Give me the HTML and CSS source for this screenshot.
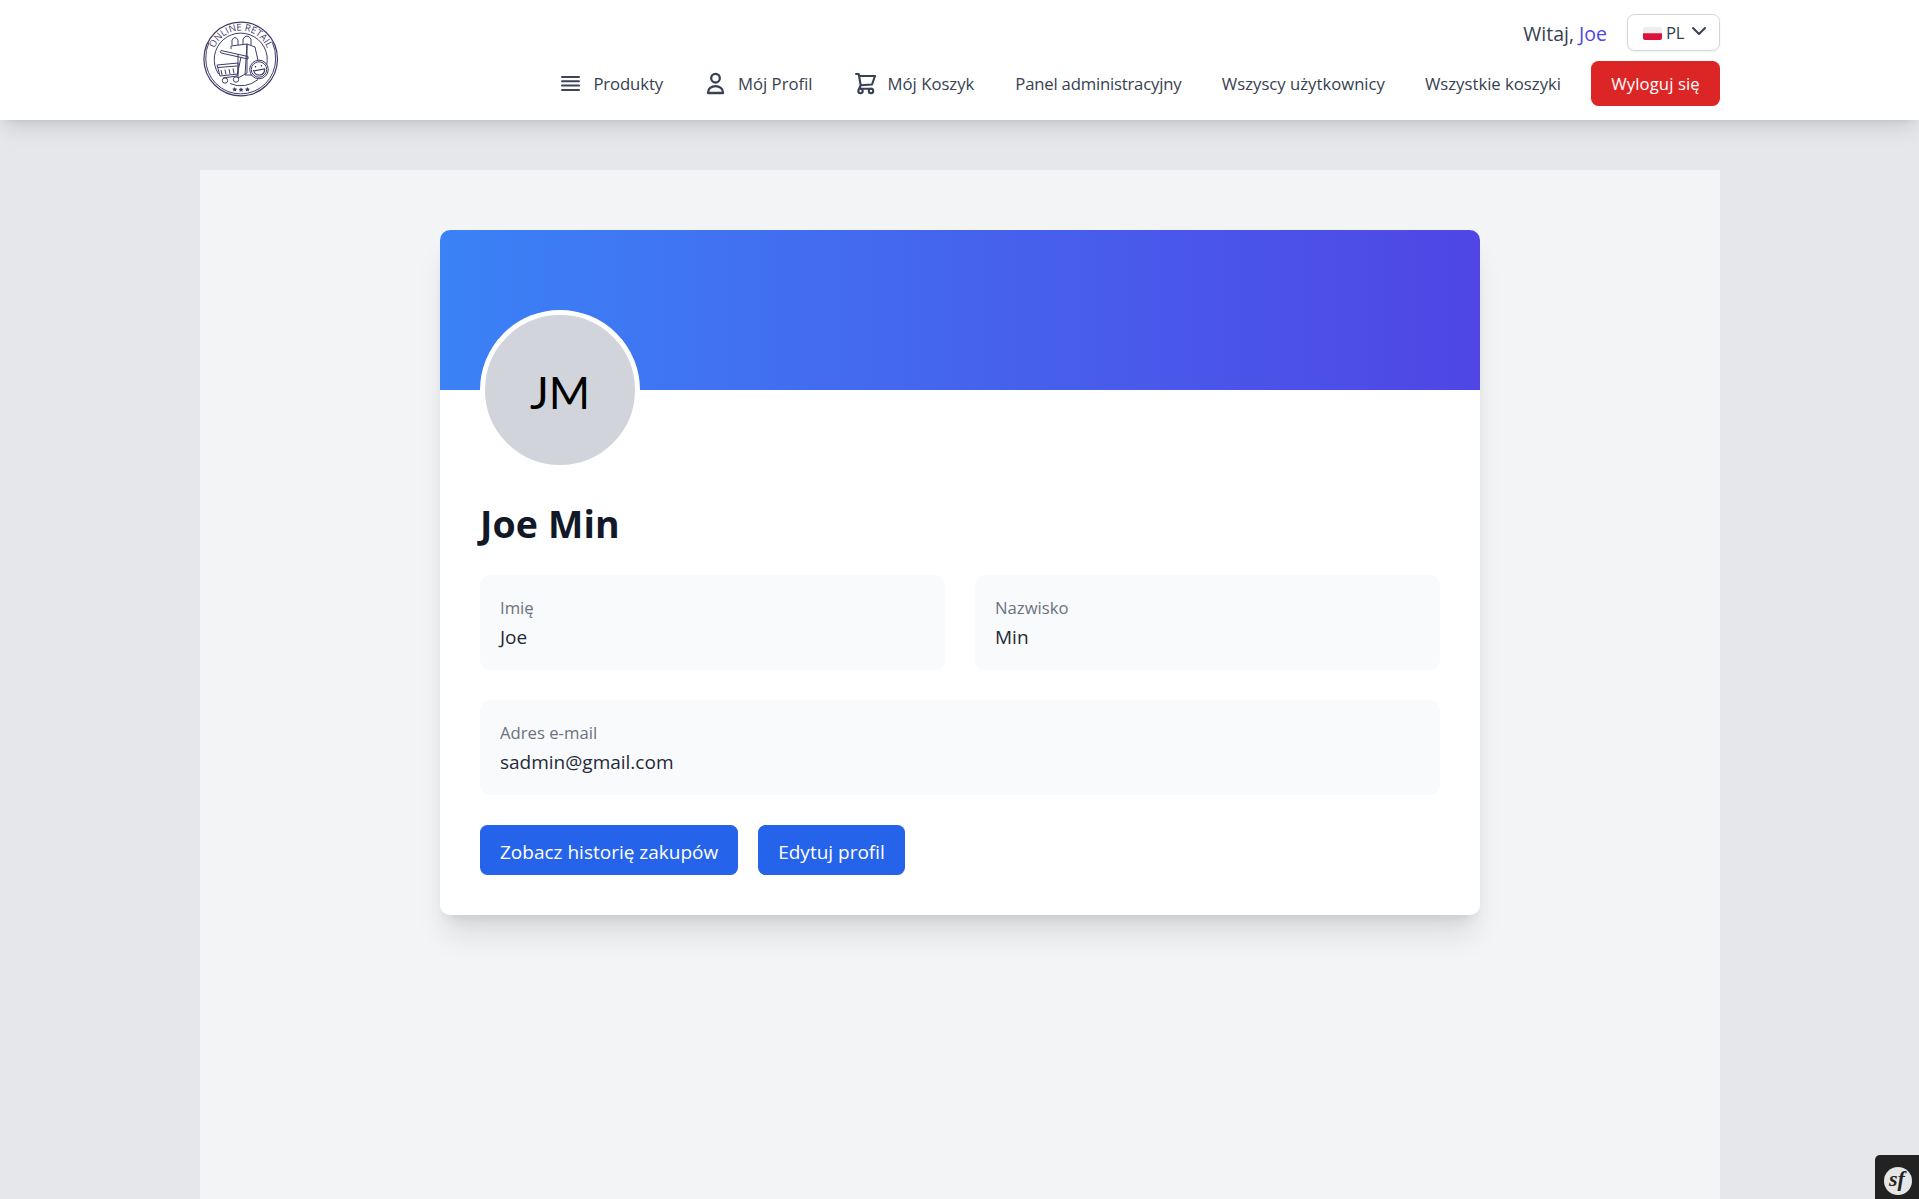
FILE: index.html
```html
<!DOCTYPE html>
<html lang="pl">
<head>
<meta charset="utf-8">
<title>Mój Profil</title>
<link rel="stylesheet" href="styles.css">
</head>
<body>
<header class="header">
  <div class="header-inner">
    <a class="logo">
      <svg width="80" height="80" viewBox="0 0 80 80" fill="none" stroke="#3f3d68" stroke-width="1">
        <defs><path id="arc" d="M12.300 45A28.200 28.200 0 1 1 67.300 45"/></defs>
        <circle cx="39.7" cy="39" r="36.8" stroke-width="1.2"/>
        <path d="M8 22.5A35 35 0 0 0 4.8 39a34.9 34.9 0 0 0 69.8 0 35 35 0 0 0-3.2-16.500"/>
        <path d="M17.500 54A26.500 26.500 0 1 1 62 54M29 63.500a26.500 26.500 0 0 0 28-4"/>
        <text class="logo-text"><textPath href="#arc" startOffset="50%">ONLINE RETAIL</textPath></text>
        <path d="M30 29V26l16-2v29l-9 5V34M46 24l8 3 4 18M46 24l-2 31h8M31 25v-5q3-5 6 0v5M42 24v-5q4-6 8 0v6"/>
        <path d="M20 30.500l27 6v2.500l-27-6q-1.500-1.200 0-2.500zM40 37l-4 19-14 2M16 45l21-2v11l-18 2zM17 47.500l19-1.500M20 50l1 5M24 49.500l1 5M28 49l1 5M32 48.500l1 5"/>
        <circle cx="24" cy="60.500" r="2.700"/><circle cx="35" cy="59.500" r="2.700"/>
        <circle cx="58" cy="49.500" r="9.300" fill="#fff"/><circle cx="58" cy="49.500" r="7.700"/>
        <path d="M52.500 50q1 5.500 6.500 5 5-1 4.500-6l-11 2M54.500 46v1.500M60.500 45v1.500" stroke-width="1.200"/>
        <g fill="#3f3d68" stroke="none"><path id="star" d="M33.700 67l.8 1.500 1.700.2-1.200 1.200.3 1.700-1.600-.8-1.500.8.3-1.700-1.300-1.200 1.700-.2z"/><use href="#star" x="6.300" y=".3"/><use href="#star" x="12.700"/></g>
      </svg>
    </a>
    <div class="header-right">
      <div class="greeting-row">
        <span class="greeting">Witaj, <a class="username">Joe</a></span>
        <button class="lang">
          <svg class="flag" width="19" height="13" viewBox="0 0 19 13"><rect width="19" height="13" rx="2" fill="#eee"/><path d="M0 6.300h19V11a2 2 0 0 1-2 2H2a2 2 0 0 1-2-2z" fill="#dc143c"/></svg>
          <span class="lang-code">PL</span>
          <svg class="chevron" width="16" height="10" viewBox="0 0 16 10" fill="none" stroke="#374151" stroke-width="2" stroke-linecap="round" stroke-linejoin="round"><path d="M2 2l6 6 6-6"/></svg>
        </button>
      </div>
      <nav class="nav">
        <a class="nav-link"><svg class="nav-icon" viewBox="0 0 25 25" stroke="#3b465a" stroke-width="2" stroke-linecap="round"><path d="M4 5.900h17M4 10.200h17M4 14.600h17M4 19h17"/></svg>Produkty</a>
        <a class="nav-link"><svg class="nav-icon" viewBox="0 0 25 25" fill="none" stroke="#374151" stroke-width="2.300" stroke-linejoin="round"><circle cx="12.500" cy="7.200" r="4.300"/><path d="M5 22v-.6a7.500 6.300 0 0 1 15 0v.6z"/></svg>Mój Profil</a>
        <a class="nav-link"><svg class="nav-icon" viewBox="0 0 25 25" fill="none" stroke="#374151" stroke-width="2.100" stroke-linecap="round" stroke-linejoin="round"><path d="M3 3h2.700l2 11.200-1.600 3.500h12.800M6.200 5H22l-3 8.500-11.300.7"/><circle cx="7.500" cy="20" r="2.200"/><circle cx="18" cy="20" r="2.200"/></svg>Mój Koszyk</a>
        <a class="nav-link nav-link-tight">Panel administracyjny</a>
        <a class="nav-link">Wszyscy użytkownicy</a>
        <a class="nav-link">Wszystkie koszyki</a>
        <a class="logout">Wyloguj się</a>
      </nav>
    </div>
  </div>
</header>
<main class="main">
  <section class="card">
    <div class="cover"></div>
    <div class="card-body">
      <div class="avatar"><span>JM</span></div>
      <h1 class="name">Joe Min</h1>
      <div class="fields">
        <div class="field"><div class="label">Imię</div><div class="value">Joe</div></div>
        <div class="field"><div class="label">Nazwisko</div><div class="value">Min</div></div>
        <div class="field field-wide"><div class="label">Adres e-mail</div><div class="value">sadmin@gmail.com</div></div>
      </div>
      <div class="actions">
        <a class="button">Zobacz historię zakupów</a>
        <a class="button">Edytuj profil</a>
      </div>
    </div>
  </section>
</main>
<div class="toolbar">
  <svg width="28" height="28" viewBox="0 0 28 28"><circle cx="14" cy="14" r="14" fill="#e6e6e6"/><text class="sf" x="13" y="19">sf</text></svg>
</div>
</body>
</html>
```
FILE: styles.css
```css
* { box-sizing: border-box; }
body {
  margin: 0;
  height: 1199px;
  overflow: hidden;
  display: flex;
  flex-direction: column;
  background: #e5e7eb;
  color: #1f2937;
  font-family: "Open Sans", "Noto Sans", sans-serif;
  font-size: 19px;
  line-height: 30px;
}
.header {
  flex: none;
  height: 120px;
  background: #fff;
  box-shadow: 0 12.5px 18.75px -3.75px rgba(0,0,0,.1), 0 5px 7.5px -5px rgba(0,0,0,.1);
}
.header-inner {
  width: 1520px;
  height: 120px;
  margin: 0 auto 0 200px;
  display: flex;
  justify-content: space-between;
}
.logo { padding: 20px 0 0 .5px; height: 100px; }
.logo svg { display: block; }
.logo-text {
  font: 9.5px "Open Sans", sans-serif;
  fill: #3f3d68;
  stroke: none;
  text-anchor: middle;
}
.header-right {
  display: flex;
  flex-direction: column;
  align-items: flex-end;
  gap: 10px;
  padding-top: 14px;
  color: #374151;
}
.greeting-row { display: flex; align-items: center; gap: 20px; height: 37px; }
.greeting { font-size: 19.5px; padding-top: 2px; }
.username { color: #4f46e5; }
.lang {
  display: flex;
  align-items: center;
  width: 93px;
  height: 37px;
  padding: 0 12px 0 15px;
  border: 1px solid #d1d5db;
  border-radius: 7.5px;
  background: #fff;
  color: #374151;
  font: 16.700px/25px "Open Sans", sans-serif;
  box-shadow: 0 1px 2.500px rgba(0,0,0,.05);
}
.flag { margin-top: 2px; }
.lang-code { margin-left: 4px; letter-spacing: -.3px; }
.chevron { margin: 0 0 4px auto; }
.nav {
  display: flex;
  align-items: center;
  height: 45px;
  gap: 40px;
  font-size: 16.700px;
  line-height: 25px;
  white-space: nowrap;
}
.nav-link { display: flex; align-items: center; gap: 10px; }
.nav-link:first-child { letter-spacing: -.1px; }
.nav-link:nth-child(3) { padding-right: 1px; }
.nav-link-tight { letter-spacing: -.2px; padding-right: .5px; }
.nav-icon { width: 25px; height: 25px; }
.logout {
  width: 129px;
  margin-left: -10px;
  padding: 10px 0;
  border-radius: 7.5px;
  background: #dc2626;
  color: #fff;
  text-align: center;
  letter-spacing: .1px;
}
.main {
  flex: 1;
  width: 1520px;
  margin: 50px 0 0 200px;
  padding: 60px 240px 0;
  background: #f3f4f6;
}
.card {
  width: 1040px;
  height: 685px;
  border-radius: 10px;
  background: #fff;
  overflow: hidden;
  box-shadow: 0 25px 31.25px -6.25px rgba(0,0,0,.1), 0 10px 12.5px -7.5px rgba(0,0,0,.1);
}
.cover { height: 160px; background: linear-gradient(to right, #3b82f6, #4f46e5); }
.card-body { padding: 0 40px 40px; }
.avatar {
  position: relative;
  width: 160px;
  height: 160px;
  margin-top: -80px;
  border: 5px solid #fff;
  border-radius: 50%;
  background: #d1d5db;
  color: #000;
  display: flex;
  align-items: center;
  justify-content: center;
  font-family: Lato, "Open Sans", sans-serif;
  font-size: 44.5px;
  line-height: 50px;
}
.avatar span { padding-top: 4px; }
.name {
  margin: 30px 0 0;
  height: 45px;
  color: #111827;
  font-size: 37.5px;
  line-height: 48px;
  letter-spacing: .1px;
  font-weight: 700;
}
.fields {
  display: grid;
  grid-template-columns: 1fr 1fr;
  gap: 30px;
  margin-top: 30px;
}
.field { height: 95px; padding: 20px; border-radius: 10px; background: #f9fafb; }
.field-wide { grid-column: span 2; }
.label { font-size: 16.700px; line-height: 25px; color: #6b7280; }
.value { line-height: 30px; padding-top: 2px; }
.actions { display: flex; gap: 20px; margin-top: 30px; }
.button {
  height: 50px;
  padding: 12px 20px 8px;
  border-radius: 7.5px;
  background: #2563eb;
  color: #fff;
}
.toolbar {
  position: absolute;
  right: 0;
  bottom: 0;
  width: 44px;
  height: 44px;
  padding: 12px 0 0 9px;
  border-top-left-radius: 5px;
  background: #222;
}
.toolbar svg { display: block; }
.sf {
  font: italic bold 22px "Liberation Serif", serif;
  fill: #222;
  text-anchor: middle;
}
```
